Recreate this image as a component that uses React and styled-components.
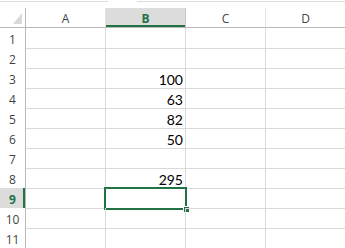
import React from "react";
import styled, { createGlobalStyle } from "styled-components";

const GREEN = "#217346";
const GRID = "#d9d9d9";
const EDGE = "#b9b9b9";

const GlobalStyle = createGlobalStyle`
  html, body {
    margin: 0;
    padding: 0;
    background: #ffffff;
  }
  * { box-sizing: border-box; }
`;

// --- Layout ---
const Page = styled.div`
  width: 345px;
  height: 248px;
  overflow: hidden;
  background: #ffffff;
  display: flex;
  flex-direction: column;
`;

const TopEdge = styled.div`
  height: 10px;
  display: flex;
  gap: 29px;
  padding-top: 1px;
`;

const EdgeLine = styled.div`
  height: 1px;
  width: ${(p) => p.$w}px;
  background: #dcdcdc;
`;

const Sheet = styled.div`
  display: flex;
  flex-direction: column;
`;

const Line = styled.div`
  display: grid;
  grid-template-columns: 26px 80px 80px 80px 80px;
  height: 20px;
`;

// --- Headers ---
const Corner = styled.div`
  position: relative;
  border-right: 1px solid ${EDGE};
  border-bottom: 1px solid ${EDGE};

  &::after {
    content: "";
    position: absolute;
    right: 3px;
    bottom: 3px;
    width: 0;
    height: 0;
    border-left: 9px solid transparent;
    border-bottom: 11px solid #dadada;
  }
`;

const ColHeader = styled.div`
  display: flex;
  align-items: center;
  justify-content: center;
  padding-top: 2px;
  font-family: "Open Sans", "DejaVu Sans", sans-serif;
  font-size: 12px;
  color: ${(p) => (p.$active ? GREEN : "#444444")};
  font-weight: ${(p) => (p.$active ? 700 : 400)};
  background: ${(p) => (p.$active ? "#dcdcdc" : "#ffffff")};
  border-right: 1px solid ${(p) => (p.$active ? "#c8c8c8" : "#e4e4e4")};
  border-bottom: 1px solid ${EDGE};
  box-shadow: ${(p) => (p.$active ? `inset 0 -2px 0 ${GREEN}` : "none")};
`;

const RowHeader = styled.div`
  display: flex;
  align-items: center;
  justify-content: center;
  padding-top: 3px;
  font-family: "Open Sans", "DejaVu Sans", sans-serif;
  font-size: 12px;
  color: ${(p) => (p.$active ? GREEN : "#444444")};
  font-weight: ${(p) => (p.$active ? 700 : 400)};
  background: ${(p) => (p.$active ? "#dcdcdc" : "#ffffff")};
  border-right: 1px solid ${EDGE};
  border-bottom: 1px solid ${(p) => (p.$active ? "#c8c8c8" : "#e4e4e4")};
  box-shadow: ${(p) => (p.$active ? `inset -2px 0 0 ${GREEN}` : "none")};
`;

// --- Cells ---
const Cell = styled.div`
  position: relative;
  display: flex;
  align-items: flex-end;
  justify-content: flex-end;
  padding-right: 2px;
  font-family: Lato, "Liberation Sans", sans-serif;
  font-size: 14px;
  line-height: 16px;
  color: #000000;
  border-right: 1px solid ${GRID};
  border-bottom: 1px solid ${GRID};
`;

const Selection = styled.div`
  position: absolute;
  left: -2px;
  right: -2px;
  top: -1px;
  bottom: -2px;
  border: 2px solid ${GREEN};
  pointer-events: none;
`;

const FillHandle = styled.div`
  position: absolute;
  right: -4px;
  bottom: -4px;
  width: 5px;
  height: 5px;
  background: ${GREEN};
  box-shadow: 0 0 0 1px #ffffff;
`;

const columns = ["A", "B", "C", "D"];
const values = { 3: 100, 4: 63, 5: 82, 6: 50, 8: 295 };
const activeRow = 9;
const activeCol = "B";

const App = () => {
  const rows = Array.from({ length: 11 }, (_, i) => i + 1);

  return (
    <Page>
      <GlobalStyle />
      <TopEdge>
        <EdgeLine $w={108} />
        <EdgeLine $w={208} />
      </TopEdge>

      <Sheet>
        <Line>
          <Corner />
          {columns.map((c) => (
            <ColHeader key={c} $active={c === activeCol}>
              {c}
            </ColHeader>
          ))}
        </Line>

        {rows.map((r) => (
          <Line key={r}>
            <RowHeader $active={r === activeRow}>{r}</RowHeader>
            {columns.map((c) => (
              <Cell key={c}>
                {c === "B" && values[r] !== undefined ? values[r] : null}
                {c === activeCol && r === activeRow && (
                  <>
                    <Selection />
                    <FillHandle />
                  </>
                )}
              </Cell>
            ))}
          </Line>
        ))}
      </Sheet>
    </Page>
  );
};

export default App;
